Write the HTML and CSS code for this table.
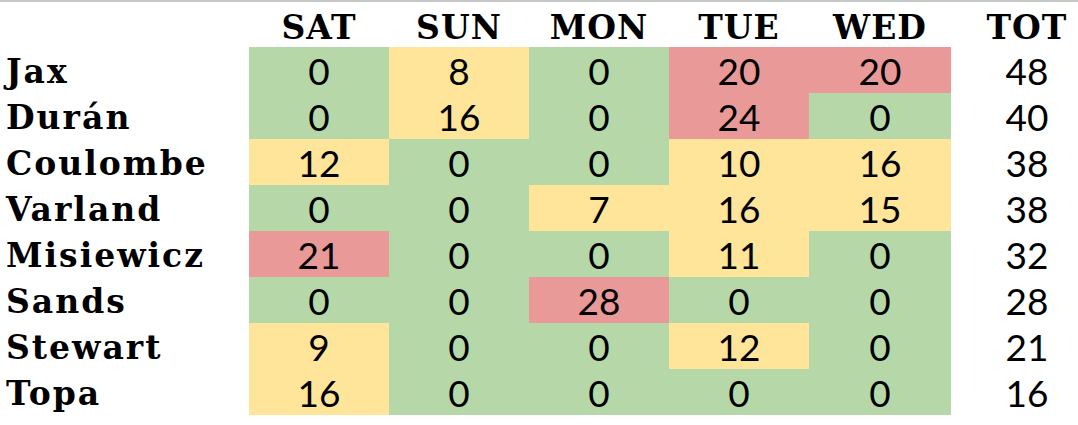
FILE: index.html
```html
<!DOCTYPE html>
<html>
<head>
<meta charset="utf-8">
<link rel="stylesheet" href="styles.css">
</head>
<body>
<div class="topline"></div>
<div class="sheet">
  <div class="hd"></div><div class="hd">SAT</div><div class="hd">SUN</div><div class="hd">MON</div><div class="hd">TUE</div><div class="hd">WED</div><div class="hd tot">TOT</div>

  <div class="name">Jax</div><div class="c g">0</div><div class="c y">8</div><div class="c g">0</div><div class="c r">20</div><div class="c r">20</div><div class="c t">48</div>
  <div class="name">Durán</div><div class="c g">0</div><div class="c y">16</div><div class="c g">0</div><div class="c r">24</div><div class="c g">0</div><div class="c t">40</div>
  <div class="name">Coulombe</div><div class="c y">12</div><div class="c g">0</div><div class="c g">0</div><div class="c y">10</div><div class="c y">16</div><div class="c t">38</div>
  <div class="name">Varland</div><div class="c g">0</div><div class="c g">0</div><div class="c y">7</div><div class="c y">16</div><div class="c y">15</div><div class="c t">38</div>
  <div class="name">Misiewicz</div><div class="c r">21</div><div class="c g">0</div><div class="c g">0</div><div class="c y">11</div><div class="c g">0</div><div class="c t">32</div>
  <div class="name">Sands</div><div class="c g">0</div><div class="c g">0</div><div class="c r">28</div><div class="c g">0</div><div class="c g">0</div><div class="c t">28</div>
  <div class="name">Stewart</div><div class="c y">9</div><div class="c g">0</div><div class="c g">0</div><div class="c y">12</div><div class="c g">0</div><div class="c t">21</div>
  <div class="name">Topa</div><div class="c y">16</div><div class="c g">0</div><div class="c g">0</div><div class="c g">0</div><div class="c g">0</div><div class="c t">16</div>
</div>
</body>
</html>
```
FILE: styles.css
```css
html, body {
  margin: 0;
  padding: 0;
  background: #ffffff;
}
.topline {
  height: 2px;
  background: #c7c9c9;
}
.sheet {
  display: grid;
  grid-template-columns: 249px 140px 140px 140px 140px 142px 152px;
  grid-template-rows: 45px repeat(8, 46px);
  color: #000;
}
.hd {
  font-family: "DejaVu Serif", serif;
  font-weight: bold;
  font-size: 33px;
  letter-spacing: 1px;
  display: flex;
  align-items: center;
  justify-content: center;
  padding-top: 6px;
}
.name {
  font-family: "DejaVu Serif", serif;
  font-weight: bold;
  font-size: 33px;
  letter-spacing: 2px;
  display: flex;
  align-items: center;
  padding-left: 6px;
  padding-top: 2px;
}
.c {
  font-family: Lato, sans-serif;
  font-size: 37px;
  display: flex;
  align-items: center;
  justify-content: center;
  padding-top: 1px;
}
.g { background: #b6d7a8; }
.y { background: #ffe599; }
.r { background: #ea9999; }
.t { background: transparent; }
```
